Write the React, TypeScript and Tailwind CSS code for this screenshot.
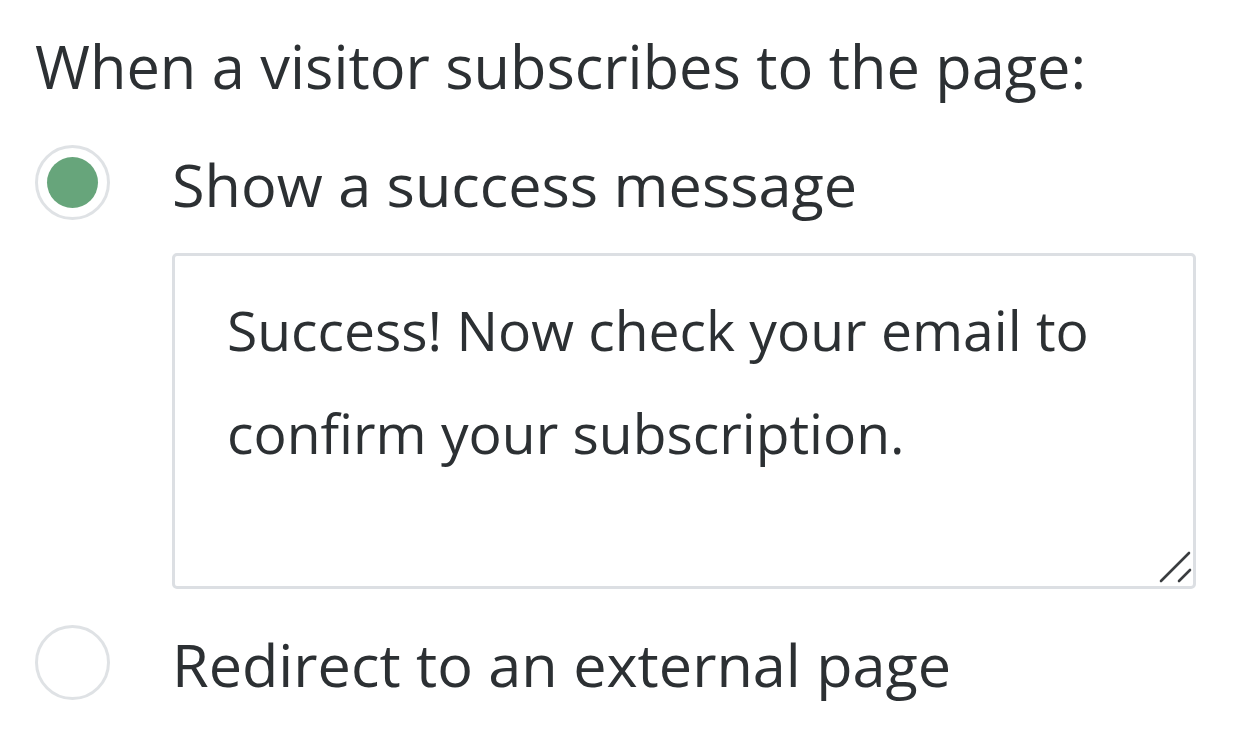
import { useState } from 'react';

const font = { fontFamily: '"Open Sans", "Noto Sans", sans-serif' };

function Radio({ checked, onClick }: { checked: boolean; onClick: () => void }) {
  return (
    <button
      type="button"
      onClick={onClick}
      className="flex h-[75px] w-[75px] shrink-0 items-center justify-center rounded-full border-[3px] border-[#dfe2e5] bg-white"
    >
      {checked ? <span className="block h-[51px] w-[51px] rounded-full bg-[#67a57b]" /> : null}
    </button>
  );
}

function ResizeGrip() {
  return (
    <svg
      className="pointer-events-none absolute bottom-0 right-0 h-[44px] w-[44px]"
      viewBox="0 0 44 44"
      fill="none"
      stroke="#3a3d40"
      strokeWidth="2.6"
      strokeLinecap="round"
    >
      <path d="M9 36 L37 8" />
      <path d="M27 36 L38 25" />
    </svg>
  );
}

export default function App() {
  const [choice, setChoice] = useState<'message' | 'redirect'>('message');
  const [message, setMessage] = useState(
    'Success! Now check your email to confirm your subscription.'
  );

  return (
    <div className="min-h-screen bg-white pl-[35px] pt-[26px] text-[#2c3033]" style={font}>
      <p className="whitespace-nowrap text-[59.5px] leading-[80px]">
        When a visitor subscribes to the page:
      </p>

      <div className="mt-[39px] flex items-start gap-[62px]">
        <Radio checked={choice === 'message'} onClick={() => setChoice('message')} />
        <span className="whitespace-nowrap pt-[2px] text-[59.4px] leading-[75px]">
          Show a success message
        </span>
      </div>

      <div className="relative ml-[137px] mt-[31px] w-[1024px]">
        <textarea
          value={message}
          onChange={(e) => setMessage(e.target.value)}
          className="block h-[336px] w-full resize-none rounded-[5px] border-[3px] border-[#dcdfe3] bg-white pl-[52px] pr-[60px] pt-[22px] text-[55.2px] leading-[103px] text-[#2c3033] outline-none"
          style={font}
        />
        <ResizeGrip />
      </div>

      <div className="mt-[36px] flex items-start gap-[62px]">
        <Radio checked={choice === 'redirect'} onClick={() => setChoice('redirect')} />
        <span className="whitespace-nowrap pt-[2px] text-[59.4px] leading-[75px]">
          Redirect to an external page
        </span>
      </div>
    </div>
  );
}
